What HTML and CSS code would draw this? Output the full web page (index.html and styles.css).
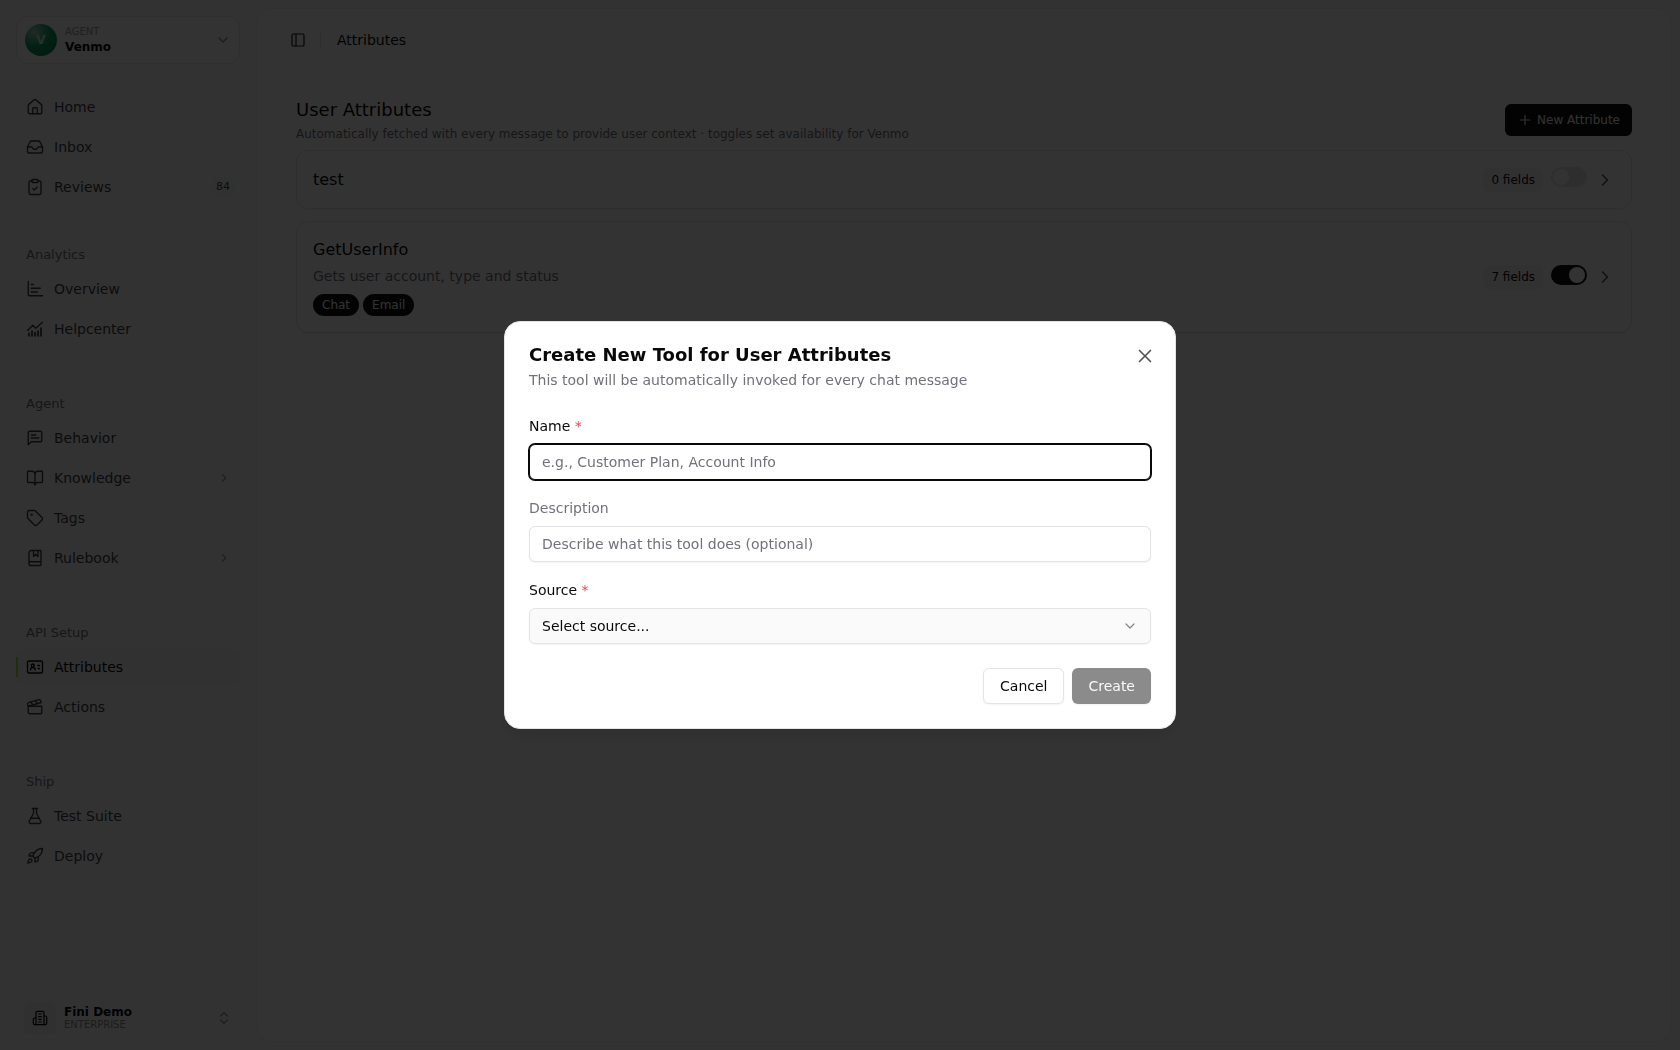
FILE: index.html
```
<!DOCTYPE html>
<html lang="en">
<head>
    <meta charset="UTF-8">
    <meta name="viewport" content="width=device-width, initial-scale=1.0">
    <title>Attributes</title>
    <link rel="stylesheet" href="styles.css">
</head>
<body>
    <div class="app">
        <aside class="sidebar">
            <div class="sidebar-top">
                <button type="button" class="agent-switch">
                    <span class="agent-avatar">V</span>
                    <span class="agent-text">
                        <span class="agent-label">AGENT</span>
                        <span class="agent-name">Venmo</span>
                    </span>
                    <svg class="icon icon-sm muted" viewBox="0 0 24 24"><path d="m6 9 6 6 6-6"/></svg>
                </button>
            </div>
            <nav class="nav">
                <div class="nav-group">
                    <a href="#home" class="nav-item">
                        <svg class="icon" viewBox="0 0 24 24"><path d="M15 21v-7a1 1 0 0 0-1-1h-4a1 1 0 0 0-1 1v7"/><path d="M3 10a2 2 0 0 1 .7-1.5l7-6a2 2 0 0 1 2.600 0l7 6A2 2 0 0 1 21 10v9a2 2 0 0 1-2 2H5a2 2 0 0 1-2-2z"/></svg>
                        <span>Home</span>
                    </a>
                    <a href="#inbox" class="nav-item">
                        <svg class="icon" viewBox="0 0 24 24"><path d="M22 12h-6l-2 3h-4l-2-3H2"/><path d="M5.450 5.110 2 12v6a2 2 0 0 0 2 2h16a2 2 0 0 0 2-2v-6l-3.450-6.890A2 2 0 0 0 16.760 4H7.240a2 2 0 0 0-1.790 1.110z"/></svg>
                        <span>Inbox</span>
                    </a>
                    <a href="#reviews" class="nav-item">
                        <svg class="icon" viewBox="0 0 24 24"><rect x="8" y="2" width="8" height="4" rx="1"/><path d="M16 4h2a2 2 0 0 1 2 2v14a2 2 0 0 1-2 2H6a2 2 0 0 1-2-2V6a2 2 0 0 1 2-2h2"/><path d="m9 14 2 2 4-4"/></svg>
                        <span>Reviews</span>
                        <span class="nav-count">84</span>
                    </a>
                </div>
                <div class="nav-group">
                    <h2 class="nav-label">Analytics</h2>
                    <a href="#overview" class="nav-item">
                        <svg class="icon" viewBox="0 0 24 24"><path d="M3 2v17a2 2 0 0 0 2 2h17"/><path d="M7 6h3M7 11h12M7 16h8"/></svg>
                        <span>Overview</span>
                    </a>
                    <a href="#helpcenter" class="nav-item">
                        <svg class="icon" viewBox="0 0 24 24"><path d="m2 14 7-7 4 4 9-8"/><path class="bars" d="M4 17v5M8 14v8M12 16v6M16 14v8M20 10v12"/></svg>
                        <span>Helpcenter</span>
                    </a>
                </div>
                <div class="nav-group">
                    <h2 class="nav-label">Agent</h2>
                    <a href="#behavior" class="nav-item">
                        <svg class="icon" viewBox="0 0 24 24"><path d="M21 15a2 2 0 0 1-2 2H7l-4 4V5a2 2 0 0 1 2-2h14a2 2 0 0 1 2 2z"/><path d="M7 8h6M7 12h10"/></svg>
                        <span>Behavior</span>
                    </a>
                    <a href="#knowledge" class="nav-item">
                        <svg class="icon" viewBox="0 0 24 24"><path d="M12 7v14"/><path d="M3 18a1 1 0 0 1-1-1V4a1 1 0 0 1 1-1h5a4 4 0 0 1 4 4 4 4 0 0 1 4-4h5a1 1 0 0 1 1 1v13a1 1 0 0 1-1 1h-6a3 3 0 0 0-3 3 3 3 0 0 0-3-3z"/></svg>
                        <span>Knowledge</span>
                        <svg class="icon nav-arrow" viewBox="0 0 24 24"><path d="m9 18 6-6-6-6"/></svg>
                    </a>
                    <a href="#tags" class="nav-item">
                        <svg class="icon" viewBox="0 0 24 24"><path d="M12.600 2.600A2 2 0 0 0 11.200 2H4a2 2 0 0 0-2 2v7.200a2 2 0 0 0 .6 1.400l8.700 8.700a2.400 2.400 0 0 0 3.400 0l6.600-6.600a2.400 2.400 0 0 0 0-3.400z"/><circle cx="7.500" cy="7.500" r=".7"/></svg>
                        <span>Tags</span>
                    </a>
                    <a href="#rulebook" class="nav-item">
                        <svg class="icon" viewBox="0 0 24 24"><path d="M4 19V5a3 3 0 0 1 3-3h12a1 1 0 0 1 1 1v18a1 1 0 0 1-1 1H6.500a2.500 2.500 0 0 1 0-5H20"/><path d="M10 2v8l3-3 3 3V2"/></svg>
                        <span>Rulebook</span>
                        <svg class="icon nav-arrow" viewBox="0 0 24 24"><path d="m9 18 6-6-6-6"/></svg>
                    </a>
                </div>
                <div class="nav-group">
                    <h2 class="nav-label">API Setup</h2>
                    <a href="#attributes" class="nav-item active">
                        <svg class="icon" viewBox="0 0 24 24"><rect x="2" y="4" width="20" height="16" rx="2"/><path d="M16 10h2M16 14h2M6 16v-1a2 2 0 0 1 2-2h2a2 2 0 0 1 2 2v1"/><circle cx="9" cy="10" r="2"/></svg>
                        <span>Attributes</span>
                    </a>
                    <a href="#actions" class="nav-item">
                        <svg class="icon" viewBox="0 0 24 24"><path d="M20.200 6 3 11l-.9-2.400c-.3-1.100.3-2.200 1.300-2.500l13.500-4c1.100-.3 2.200.3 2.500 1.300z"/><path d="m6.200 5.300 3.100 3.900M12.400 3.400l3.100 4"/><path d="M3 11h18v8a2 2 0 0 1-2 2H5a2 2 0 0 1-2-2z"/></svg>
                        <span>Actions</span>
                    </a>
                </div>
                <div class="nav-group">
                    <h2 class="nav-label">Ship</h2>
                    <a href="#test-suite" class="nav-item">
                        <svg class="icon" viewBox="0 0 24 24"><path d="M14 2v6a2 2 0 0 0 .25.960l5.510 10.080A2 2 0 0 1 18 22H6a2 2 0 0 1-1.760-2.960L9.750 8.960A2 2 0 0 0 10 8V2"/><path d="M6.450 15h11.100M8.500 2h7"/></svg>
                        <span>Test Suite</span>
                    </a>
                    <a href="#deploy" class="nav-item">
                        <svg class="icon" viewBox="0 0 24 24"><path d="M4.500 16.500c-1.500 1.260-2 5-2 5s3.740-.5 5-2c.710-.840.700-2.130-.09-2.910a2.180 2.180 0 0 0-2.910-.09z"/><path d="m12 15-3-3a22 22 0 0 1 2-3.950A12.880 12.880 0 0 1 22 2c0 2.720-.78 7.500-6 11a22.350 22.350 0 0 1-4 2z"/><path d="M9 12H4s.55-3.030 2-4c1.620-1.080 5 0 5 0M12 15v5s3.030-.55 4-2c1.080-1.620 0-5 0-5"/></svg>
                        <span>Deploy</span>
                    </a>
                </div>
            </nav>
            <button type="button" class="account">
                <span class="account-logo">
                    <svg class="icon icon-sm" viewBox="0 0 24 24"><path d="M6 22V4a2 2 0 0 1 2-2h8a2 2 0 0 1 2 2v18z"/><path d="M6 12H4a2 2 0 0 0-2 2v6a2 2 0 0 0 2 2h2M18 9h2a2 2 0 0 1 2 2v9a2 2 0 0 1-2 2h-2M10 6h4M10 10h4M10 14h4M10 18h4"/></svg>
                </span>
                <span class="account-text">
                    <span class="account-name">Fini Demo</span>
                    <span class="account-plan">ENTERPRISE</span>
                </span>
                <svg class="icon icon-sm muted" viewBox="0 0 24 24"><path d="m7 15 5 5 5-5M7 9l5-5 5 5"/></svg>
            </button>
        </aside>

        <main class="panel">
            <header class="topbar">
                <button type="button" class="icon-button" aria-label="Toggle sidebar">
                    <svg class="icon icon-sm" viewBox="0 0 24 24"><rect x="3" y="3" width="18" height="18" rx="2"/><path d="M9 3v18"/></svg>
                </button>
                <span class="separator"></span>
                <span class="crumb">Attributes</span>
            </header>
            <div class="content">
                <div class="content-head">
                    <div>
                        <h1>User Attributes</h1>
                        <p>Automatically fetched with every message to provide user context · toggles set availability for Venmo</p>
                    </div>
                    <button type="button" class="new-button">
                        <svg class="icon icon-sm" viewBox="0 0 24 24"><path d="M5 12h14M12 5v14"/></svg>
                        New Attribute
                    </button>
                </div>
                <div class="cards">
                    <article class="card">
                        <div class="card-info">
                            <h3>test</h3>
                        </div>
                        <span class="fields">0 fields</span>
                        <input type="checkbox" class="switch" aria-label="Enable test">
                        <svg class="icon icon-md" viewBox="0 0 24 24"><path d="m9 18 6-6-6-6"/></svg>
                    </article>
                    <article class="card">
                        <div class="card-info">
                            <h3>GetUserInfo</h3>
                            <p>Gets user account, type and status</p>
                            <div class="pills">
                                <span class="pill">Chat</span>
                                <span class="pill">Email</span>
                            </div>
                        </div>
                        <span class="fields">7 fields</span>
                        <input type="checkbox" class="switch" aria-label="Enable GetUserInfo" checked>
                        <svg class="icon icon-md" viewBox="0 0 24 24"><path d="m9 18 6-6-6-6"/></svg>
                    </article>
                </div>
            </div>
        </main>
    </div>

    <div class="overlay">
        <div class="modal" role="dialog" aria-modal="true" aria-labelledby="modalTitle">
            <button type="button" class="close" aria-label="Close">
                <svg class="icon icon-lg" viewBox="0 0 24 24"><path d="M18 6 6 18M6 6l12 12"/></svg>
            </button>
            <div class="modal-head">
                <h2 id="modalTitle">Create New Tool for User Attributes</h2>
                <p>This tool will be automatically invoked for every chat message</p>
            </div>
            <form class="modal-form">
                <div class="form-group">
                    <label for="toolName">Name <span class="required">*</span></label>
                    <input type="text" id="toolName" class="focused" placeholder="e.g., Customer Plan, Account Info">
                </div>
                <div class="form-group">
                    <label for="toolDescription" class="optional">Description</label>
                    <input type="text" id="toolDescription" placeholder="Describe what this tool does (optional)">
                </div>
                <div class="form-group">
                    <label for="toolSource">Source <span class="required">*</span></label>
                    <div class="select-wrap">
                        <select id="toolSource">
                            <option>Select source...</option>
                        </select>
                        <svg class="icon icon-sm select-arrow" viewBox="0 0 24 24"><path d="m6 9 6 6 6-6"/></svg>
                    </div>
                </div>
                <div class="actions">
                    <button type="button" class="btn">Cancel</button>
                    <button type="submit" class="btn btn-primary" disabled>Create</button>
                </div>
            </form>
        </div>
    </div>
</body>
</html>
```
FILE: styles.css
```
* {
    box-sizing: border-box;
}
body {
    margin: 0;
    font-family: "DejaVu Sans", sans-serif;
    font-size: 14px;
    line-height: 20px;
    color: #09090b;
    background-color: #fafafa;
}
h1, h2, h3, p {
    margin: 0;
    font-weight: normal;
}
button, input, select {
    font-family: inherit;
    font-size: 14px;
    color: inherit;
}
button {
    padding: 0;
    border: 0;
    background: none;
    text-align: left;
}
.icon {
    width: 18px;
    height: 18px;
    flex: none;
    fill: none;
    stroke: currentColor;
    stroke-width: 1.8;
    stroke-linecap: round;
    stroke-linejoin: round;
}
.icon-sm {
    width: 16px;
    height: 16px;
}
.icon-md {
    width: 20px;
    height: 20px;
    color: #52525b;
}
.icon-lg {
    width: 22px;
    height: 22px;
}
.muted {
    color: #8a8a93;
}
.bars {
    stroke-width: 2.4;
    stroke-linecap: butt;
}

.app {
    display: flex;
    min-height: 100vh;
}

/* sidebar */
.sidebar {
    width: 256px;
    flex: none;
    display: flex;
    flex-direction: column;
    padding: 0 8px 8px;
}
.sidebar-top {
    padding: 16px 8px 8px;
    border-bottom: 1px solid #f4f4f5;
}
.agent-switch {
    display: flex;
    align-items: center;
    gap: 8px;
    width: 100%;
    height: 48px;
    padding: 0 8px;
    border: 1px solid #e4e4e7;
    border-radius: 12px;
    background-color: #fcfcfc;
}
.agent-avatar {
    display: flex;
    align-items: center;
    justify-content: center;
    width: 32px;
    height: 32px;
    border-radius: 50%;
    background: radial-gradient(circle at 30% 25%, #a0d0bc, #10a068 45%, #04784c);
    color: #d8e8e0;
    font-size: 12px;
    font-weight: bold;
}
.agent-text, .account-text {
    flex: 1;
    display: flex;
    flex-direction: column;
}
.agent-label {
    font-size: 10px;
    line-height: 14px;
    color: #a1a1aa;
}
.agent-name {
    font-size: 12px;
    line-height: 16px;
    font-weight: bold;
}
.nav {
    flex: 1;
    display: flex;
    flex-direction: column;
    gap: 41px;
    padding: 16px 8px;
}
.nav-group {
    display: flex;
    flex-direction: column;
    gap: 4px;
}
.nav-group:first-child {
    margin-bottom: -7px;
}
.nav-label {
    margin-bottom: -4px;
    padding: 0 10px;
    font-size: 13px;
    line-height: 32px;
    color: #71717a;
}
.nav-item {
    display: flex;
    align-items: center;
    gap: 10px;
    height: 36px;
    padding: 0 4px 0 10px;
    border-radius: 8px;
    color: #3f3f46;
    text-decoration: none;
}
.nav-item.active {
    position: relative;
    background-color: #f6f6f6;
    color: #09090b;
}
.nav-item.active::before {
    content: "";
    position: absolute;
    left: 0;
    top: 8px;
    width: 2px;
    height: 20px;
    background-color: #a3e635;
}
.nav-count {
    margin-left: auto;
    padding: 0 6px;
    border-radius: 10px;
    background-color: #f4f4f5;
    font-size: 11px;
}
.nav-arrow {
    width: 14px;
    height: 14px;
    margin: 0 5px 0 auto;
    color: #71717a;
}
.account {
    display: flex;
    align-items: center;
    gap: 8px;
    padding: 8px 16px;
    border-top: 1px solid #f4f4f5;
}
.account-logo {
    display: flex;
    align-items: center;
    justify-content: center;
    width: 32px;
    height: 32px;
    border-radius: 6px;
    background-color: #eeeeef;
}
.account-name {
    font-size: 12px;
    line-height: 14px;
    font-weight: bold;
}
.account-plan {
    font-size: 10px;
    line-height: 12px;
    color: #8a8a93;
}

/* main panel */
.panel {
    flex: 1;
    margin: 8px 8px 8px 0;
    border: 1px solid #f0f0f1;
    border-radius: 16px;
    background-color: #fff;
}
.topbar {
    display: flex;
    align-items: center;
    height: 62px;
    padding: 0 33px;
}
.icon-button {
    display: flex;
    color: #18181b;
}
.separator {
    width: 1px;
    height: 16px;
    margin: 0 16px 0 14px;
    background-color: #e4e4e7;
}
.content {
    padding: 25px 39px;
}
.content-head {
    display: flex;
    align-items: center;
    justify-content: space-between;
    padding-bottom: 6px;
}
.content-head h1 {
    font-size: 18px;
    line-height: 28px;
}
.content-head p {
    font-size: 12px;
    color: #71717a;
}
.new-button {
    display: flex;
    align-items: center;
    gap: 4px;
    height: 32px;
    padding: 0 12px;
    border-radius: 6px;
    background-color: #0f0f10;
    color: #fafafa;
    font-size: 12px;
}
.cards {
    display: flex;
    flex-direction: column;
    gap: 12px;
}
.card {
    display: flex;
    align-items: center;
    gap: 8px;
    padding: 16px;
    border: 1px solid #e4e4e7;
    border-radius: 12px;
    box-shadow: 0 1px 2px rgba(0, 0, 0, 0.05);
}
.card-info {
    flex: 1;
}
.card h3 {
    font-size: 16px;
    line-height: 24px;
}
.card p {
    margin-top: 4px;
    color: #71717a;
}
.pills {
    display: flex;
    gap: 4px;
    margin-top: 8px;
}
.pill {
    padding: 1px 9px;
    border-radius: 11px;
    background-color: #0f0f10;
    color: #fafafa;
    font-size: 12px;
}
.fields {
    padding: 2px 8px;
    border-radius: 6px;
    background-color: #f6f6f7;
    font-size: 12px;
}
.switch {
    appearance: none;
    width: 36px;
    height: 20px;
    margin: 0 0 5px;
    padding: 2px;
    border-radius: 10px;
    background-color: #e4e4e7;
}
.switch::before {
    content: "";
    display: block;
    width: 16px;
    height: 16px;
    border-radius: 50%;
    background-color: #fff;
}
.switch:checked {
    background-color: #0f0f10;
}
.switch:checked::before {
    margin-left: auto;
}

/* modal */
.overlay {
    position: fixed;
    inset: 0;
    display: flex;
    align-items: center;
    justify-content: center;
    background-color: rgba(0, 0, 0, 0.8);
}
.modal {
    position: relative;
    width: 672px;
    max-width: 100%;
    padding: 24px;
    border: 1px solid #e4e4e7;
    border-radius: 16px;
    background-color: #fff;
    box-shadow: 0 10px 15px -3px rgba(0, 0, 0, 0.1);
}
.close {
    position: absolute;
    top: 23px;
    right: 19px;
    display: flex;
    color: #52525b;
}
.modal-head h2 {
    margin-bottom: 6px;
    font-size: 18px;
    line-height: 18px;
    font-weight: bold;
}
.modal-head p {
    color: #71717a;
}
.modal-form {
    display: flex;
    flex-direction: column;
    gap: 18px;
    margin-top: 26px;
}
.form-group {
    display: flex;
    flex-direction: column;
    gap: 8px;
}
.optional {
    color: #71717a;
}
.required {
    color: #ef4444;
}
.form-group input, .form-group select {
    width: 100%;
    height: 36px;
    padding: 0 12px;
    border: 1px solid #e4e4e7;
    border-radius: 6px;
    background-color: #fff;
    box-shadow: 0 1px 2px rgba(0, 0, 0, 0.05);
}
.form-group input::placeholder {
    color: #71717a;
    opacity: 1;
}
.form-group input.focused {
    border-color: #09090b;
    box-shadow: 0 0 0 1px #09090b;
    outline: none;
}
.select-wrap {
    display: grid;
    align-items: center;
}
.select-wrap > * {
    grid-area: 1 / 1;
}
.form-group select {
    appearance: none;
    background-color: #fafafa;
}
.select-arrow {
    justify-self: end;
    margin-right: 13px;
    color: #84848a;
    pointer-events: none;
}
.actions {
    display: flex;
    justify-content: flex-end;
    gap: 8px;
    margin-top: 6px;
}
.btn {
    height: 36px;
    padding: 0 16px;
    border: 1px solid #e4e4e7;
    border-radius: 6px;
    background-color: #fff;
    box-shadow: 0 1px 2px rgba(0, 0, 0, 0.05);
}
.btn-primary {
    border: 0;
    background-color: #8b8b8b;
    color: #fafafa;
}
```
